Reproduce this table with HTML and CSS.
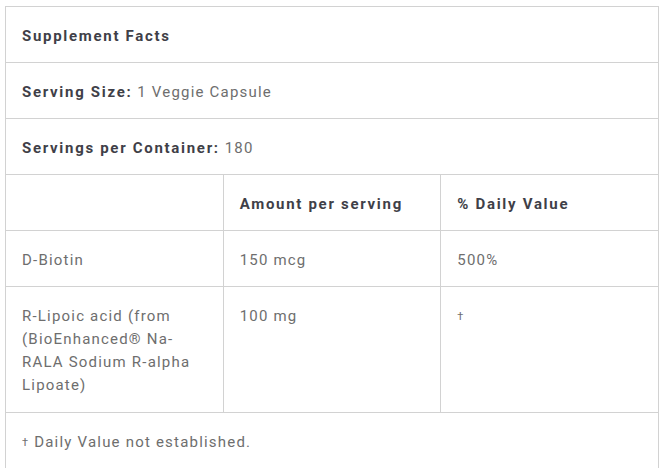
FILE: index.html
```html
<!DOCTYPE html>
<html lang="en">
<head>
    <meta charset="UTF-8">
    <meta name="viewport" content="width=device-width, initial-scale=1.0">
    <title>Supplement Facts</title>
    <link rel="stylesheet" href="styles.css">
</head>
<body>
<main class="facts">
  <table class="facts-table">
    <tr>
      <td colspan="3"><strong>Supplement Facts</strong></td>
    </tr>
    <tr>
      <td colspan="3"><strong>Serving Size:</strong> 1 Veggie Capsule</td>
    </tr>
    <tr>
      <td colspan="3"><strong>Servings per Container:</strong> 180</td>
    </tr>
    <tr>
      <td></td>
      <td><strong>Amount per serving</strong></td>
      <td><strong>% Daily Value</strong></td>
    </tr>
    <tr>
      <td>D-Biotin</td>
      <td>150 mcg</td>
      <td>500%</td>
    </tr>
    <tr class="tall">
      <td>R-Lipoic acid (from (BioEnhanced® Na-RALA Sodium R-alpha Lipoate)</td>
      <td>100 mg</td>
      <td><span class="dagger">†</span></td>
    </tr>
    <tr class="note">
      <td colspan="3"><span class="dagger">†</span> Daily Value not established.</td>
    </tr>
  </table>
</main>
</body>
</html>
```

FILE: styles.css
```css
*{
  margin: 0;
  padding: 0;
  box-sizing: border-box;
}
body{
  background: #fff;
  font-family: Roboto, "Liberation Sans", sans-serif;
  font-size: 15px;
  color: #6e6e6e;
}
.facts{
  padding: 6px 0 0 5px;
}
.facts-table{
  width: 654px;
  border-collapse: collapse;
  table-layout: fixed;
}
.facts-table td{
  border: 1px solid #d2d2d2;
  padding: 18px 16px 14px;
  line-height: 23px;
  letter-spacing: 1.2px;
  vertical-align: top;
  text-align: left;
}
.facts-table .tall td{
  padding-bottom: 15px;
}
.facts-table .note td{
  padding-bottom: 24px;
}
.facts-table strong{
  color: #3f3f48;
  font-weight: 700;
  letter-spacing: 1.7px;
}
.dagger{
  font-size: 11px;
  vertical-align: top;
}
```
